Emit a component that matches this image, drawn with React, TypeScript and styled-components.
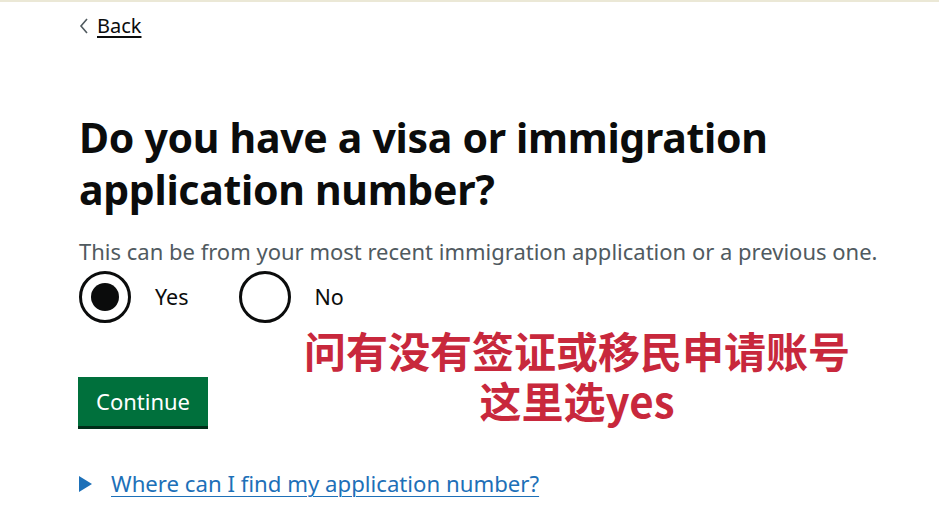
import React from "react";
import styled, { createGlobalStyle } from "styled-components";

const GlobalStyle = createGlobalStyle`
  html, body {
    margin: 0;
    padding: 0;
    background: #ffffff;
  }
  body {
    font-family: "Noto Sans", "Liberation Sans", sans-serif;
    color: #0b0c0c;
  }
`;

const Page = styled.div`
  position: relative;
  width: 939px;
  height: 526px;
  overflow: hidden;
  border-top: 2px solid #ebe8d6;
  box-sizing: border-box;
`;

const Main = styled.main`
  display: flex;
  flex-direction: column;
  align-items: flex-start;
  padding: 10px 0 0 79px;
`;

const BackLink = styled.a`
  display: flex;
  align-items: center;
  gap: 8px;
  font-size: 20px;
  line-height: 28px;
  color: #0b0c0c;
  text-decoration: underline;
  text-underline-offset: 3px;
  text-decoration-thickness: 2px;
`;

const Chevron = styled.svg`
  width: 10px;
  height: 16px;
`;

const Heading = styled.h1`
  margin: 71px 0 0;
  font-size: 41px;
  font-weight: 700;
  line-height: 52px;
  letter-spacing: -0.3px;
  width: 760px;
`;

const Hint = styled.p`
  margin: 22px 0 0;
  font-size: 22px;
  line-height: 28px;
  color: #505a5f;
`;

const RadioRow = styled.div`
  display: flex;
  gap: 50px;
  margin-top: 6px;
`;

const RadioItem = styled.label`
  display: flex;
  align-items: center;
  gap: 24px;
  font-size: 21.5px;
  line-height: 28px;
`;

const Circle = styled.span<{ $checked?: boolean }>`
  width: 52px;
  height: 52px;
  box-sizing: border-box;
  border: 3px solid #0b0c0c;
  border-radius: 50%;
  display: flex;
  align-items: center;
  justify-content: center;

  &::after {
    content: "";
    width: 28px;
    height: 28px;
    border-radius: 50%;
    background: #0b0c0c;
    display: ${(p) => (p.$checked ? "block" : "none")};
  }
`;

const Button = styled.button`
  margin-top: 54px;
  margin-left: -1px;
  width: 130px;
  height: 49px;
  border: none;
  background: #00703c;
  box-shadow: 0 3px 0 #002d18;
  color: #ffffff;
  font-family: inherit;
  font-size: 22px;
  line-height: 28px;
  padding: 0 0 2px;
`;

const Details = styled.div`
  display: flex;
  align-items: center;
  gap: 19px;
  margin-top: 44px;
`;

const Triangle = styled.span`
  width: 0;
  height: 0;
  border-top: 8px solid transparent;
  border-bottom: 8px solid transparent;
  border-left: 13px solid #1d70b8;
`;

const SummaryLink = styled.a`
  font-size: 22.2px;
  line-height: 28px;
  color: #1d70b8;
  text-decoration: underline;
  text-underline-offset: 4px;
  text-decoration-thickness: 1px;
`;

const Caption = styled.div`
  position: absolute;
  left: 577px;
  top: 323px;
  transform: translateX(-50%);
  text-align: center;
  white-space: nowrap;
  font-family: "Noto Sans CJK SC", "Noto Sans", sans-serif;
  font-size: 42px;
  font-weight: 700;
  line-height: 50px;
  color: #c8283c;
`;

export default function App() {
  return (
    <>
      <GlobalStyle />
      <Page>
        <Main>
          <BackLink>
            <Chevron viewBox="0 0 10 16">
              <path d="M8 1 L2 8 L8 15" fill="none" stroke="#505a5f" strokeWidth="1.6" />
            </Chevron>
            Back
          </BackLink>
          <Heading>Do you have a visa or immigration application number?</Heading>
          <Hint>This can be from your most recent immigration application or a previous one.</Hint>
          <RadioRow>
            <RadioItem>
              <Circle $checked />
              Yes
            </RadioItem>
            <RadioItem>
              <Circle />
              No
            </RadioItem>
          </RadioRow>
          <Button>Continue</Button>
          <Details>
            <Triangle />
            <SummaryLink>Where can I find my application number?</SummaryLink>
          </Details>
        </Main>
        <Caption>
          问有没有签证或移民申请账号
          <br />
          这里选yes
        </Caption>
      </Page>
    </>
  );
}
